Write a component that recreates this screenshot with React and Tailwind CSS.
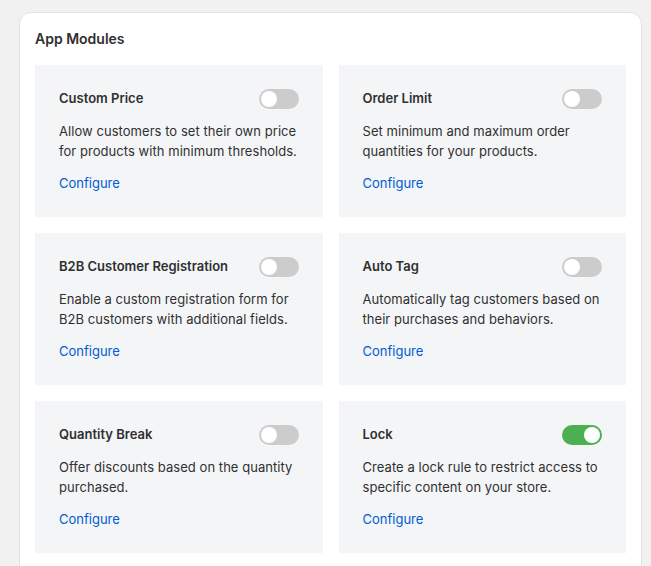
import React from 'react'

const modules = [
  { title: 'Custom Price', desc: 'Allow customers to set their own price for products with minimum thresholds.', on: false },
  { title: 'Order Limit', desc: 'Set minimum and maximum order quantities for your products.', on: false },
  { title: 'B2B Customer Registration', desc: 'Enable a custom registration form for B2B customers with additional fields.', on: false },
  { title: 'Auto Tag', desc: 'Automatically tag customers based on their purchases and behaviors.', on: false },
  { title: 'Quantity Break', desc: 'Offer discounts based on the quantity purchased.', on: false },
  { title: 'Lock', desc: 'Create a lock rule to restrict access to specific content on your store.', on: true },
]

const Toggle = ({ on }) => (
  <div className={`w-10 h-5 rounded-full flex items-center px-[2px] ${on ? 'bg-[#4caf50] justify-end' : 'bg-[#cccccc] justify-start'}`}>
    <div className='w-4 h-4 rounded-full bg-white' />
  </div>
)

const App = () => {
  return (
    <div className='min-h-screen bg-[#f1f1f1] pt-[12px] pl-[19px] pr-[9px]' style={{ fontFamily: 'Inter, "Noto Sans", sans-serif' }}>
      <div className='bg-white border border-[#e3e3e3] rounded-xl px-[15px] pt-[16px] pb-6 w-[623px]'>
        <h2 className='text-[14px] font-semibold text-[#303030] leading-5'>App Modules</h2>
        <div className='grid grid-cols-2 gap-4 mt-[16px]'>
          {modules.map((m) => (
            <div key={m.title} className='bg-[#f4f5f7] p-6 h-[152px]'>
              <div className='flex items-center justify-between h-5'>
                <span className='text-[13px] font-semibold text-[#303030]'>{m.title}</span>
                <Toggle on={m.on} />
              </div>
              <p className='mt-3 text-[13px] leading-5 text-[#303030] tracking-[0.05px]'>{m.desc}</p>
              <a href='#' className='block mt-3 text-[13px] leading-5 text-[#005bd3]'>Configure</a>
            </div>
          ))}
        </div>
      </div>
    </div>
  )
}

export default App
